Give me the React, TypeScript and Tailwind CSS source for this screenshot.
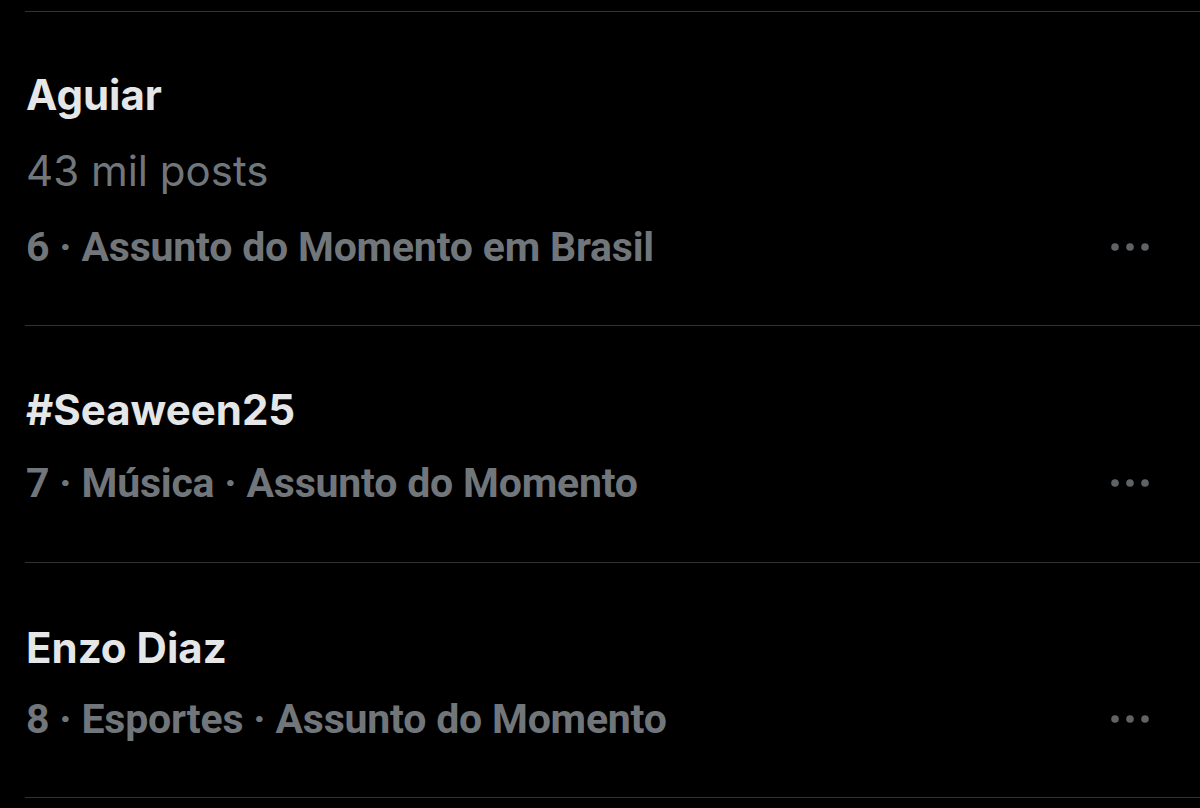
const TRENDS = [
  { title: 'Aguiar', posts: '43 mil posts', meta: '6 · Assunto do Momento em Brasil', pt: 'pt-[59px]', gap: 'mt-[28px]', pb: 'pb-[54px]' },
  { title: '#Seaween25', meta: '7 · Música · Assunto do Momento', pt: 'pt-[60px]', gap: 'mt-[25px]', pb: 'pb-[55px]' },
  { title: 'Enzo Diaz', meta: '8 · Esportes · Assunto do Momento', pt: 'pt-[61px]', gap: 'mt-[23px]', pb: 'pb-[54px]' },
]

const MoreDots = () => (
  <svg width="40" height="10" viewBox="0 0 40 10" className="shrink-0" aria-hidden>
    <circle cx="5" cy="5" r="3.8" fill="#5f6366" />
    <circle cx="20" cy="5" r="3.8" fill="#5f6366" />
    <circle cx="35" cy="5" r="3.8" fill="#5f6366" />
  </svg>
)

export default function App() {
  return (
    <div className="w-[1200px] h-[808px] bg-black overflow-hidden">
      <div className="pt-[11px]">
        <div className="ml-[25px] border-t border-[#2f3336]" />
        {TRENDS.map((t) => (
          <div key={t.title} className="ml-[25px] border-b border-[#2f3336]">
            <div className={`${t.pt} ${t.pb} pl-px pr-[50px]`}>
              <div className="font-['Inter',sans-serif] text-[42px] leading-[48px] font-bold text-[#e4e6e7]">{t.title}</div>
              {t.posts && (
                <div className="mt-[28px] font-['Inter',sans-serif] text-[42px] leading-[48px] text-[#71767b]">{t.posts}</div>
              )}
              <div className={`${t.gap} flex items-center justify-between`}>
                <span className="font-['Roboto',sans-serif] text-[41px] leading-[48px] font-bold tracking-[-0.2px] text-[#71767b]">{t.meta}</span>
                <MoreDots />
              </div>
            </div>
          </div>
        ))}
      </div>
    </div>
  )
}
